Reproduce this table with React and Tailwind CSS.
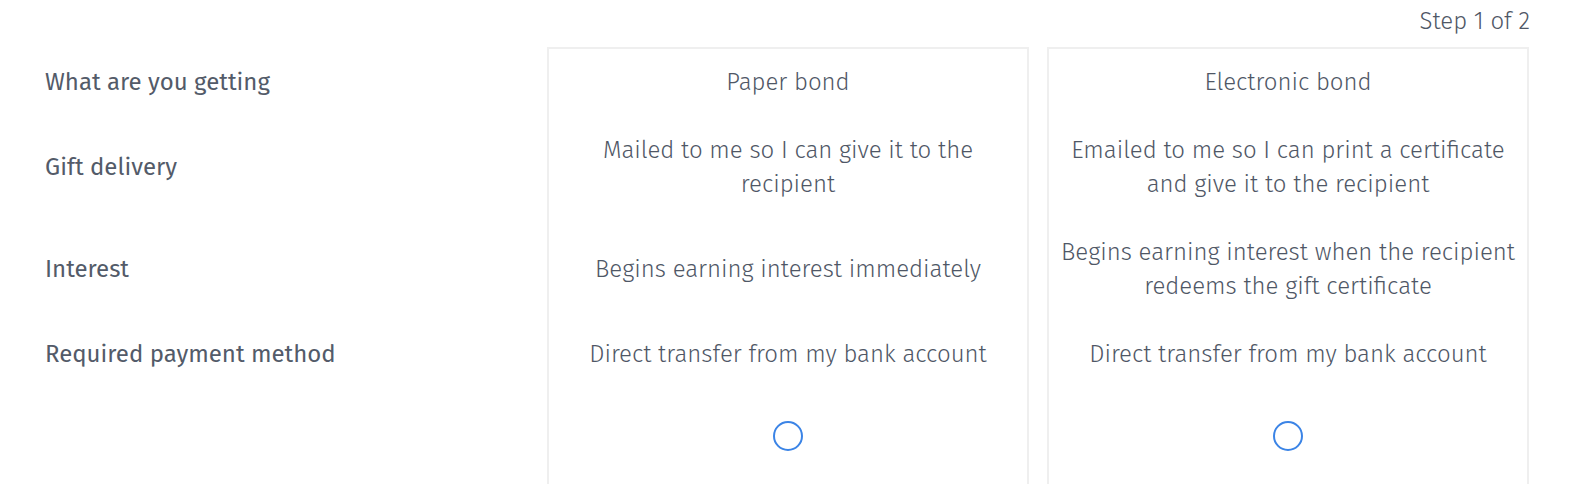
const rows = [
  { label: "What are you getting", h: "h-[34px]" },
  { label: "Gift delivery", h: "h-[68px]" },
  { label: "Interest", h: "h-[68px]" },
  { label: "Required payment method", h: "h-[34px]" },
];

const options = [
  {
    id: "paper",
    cells: [
      "Paper bond",
      "Mailed to me so I can give it to the recipient",
      "Begins earning interest immediately",
      "Direct transfer from my bank account",
    ],
  },
  {
    id: "electronic",
    cells: [
      "Electronic bond",
      "Emailed to me so I can print a certificate and give it to the recipient",
      "Begins earning interest when the recipient redeems the gift certificate",
      "Direct transfer from my bank account",
    ],
  },
];

function OptionCard({ option }) {
  return (
    <div className="w-[482px] border-2 border-[#efefef] pt-[16px] pb-[60px] px-[9px] flex flex-col gap-[34px] font-light">
      {option.cells.map((text, i) => (
        <div key={i} className={`${rows[i].h} flex items-center justify-center text-center`}>
          <p className="leading-[34px]">{text}</p>
        </div>
      ))}
      <div className="flex justify-center pt-[16px]">
        <button
          type="button"
          aria-label={`Select ${option.cells[0]}`}
          className="w-[30px] h-[30px] rounded-full border-2 border-[#3b84e6] bg-white"
        />
      </div>
    </div>
  );
}

export default function App() {
  return (
    <div className="bg-white w-[1580px] h-[484px] overflow-hidden font-['Fira_Sans','Open_Sans',sans-serif] text-[#4f5766] text-[24px]">
      <div className="flex justify-end pr-[50px] pt-[4px] h-[47px] font-light">
        <span className="leading-[34px]">Step 1 of 2</span>
      </div>
      <div className="flex pl-[45px]">
        <div className="w-[502px] pt-[18px] flex flex-col gap-[34px] text-[#535b69]">
          {rows.map((r) => (
            <div key={r.label} className={`${r.h} flex items-center`}>
              <span className="leading-[34px]">{r.label}</span>
            </div>
          ))}
        </div>
        <div className="flex gap-[18px]">
          {options.map((o) => (
            <OptionCard key={o.id} option={o} />
          ))}
        </div>
      </div>
    </div>
  );
}
